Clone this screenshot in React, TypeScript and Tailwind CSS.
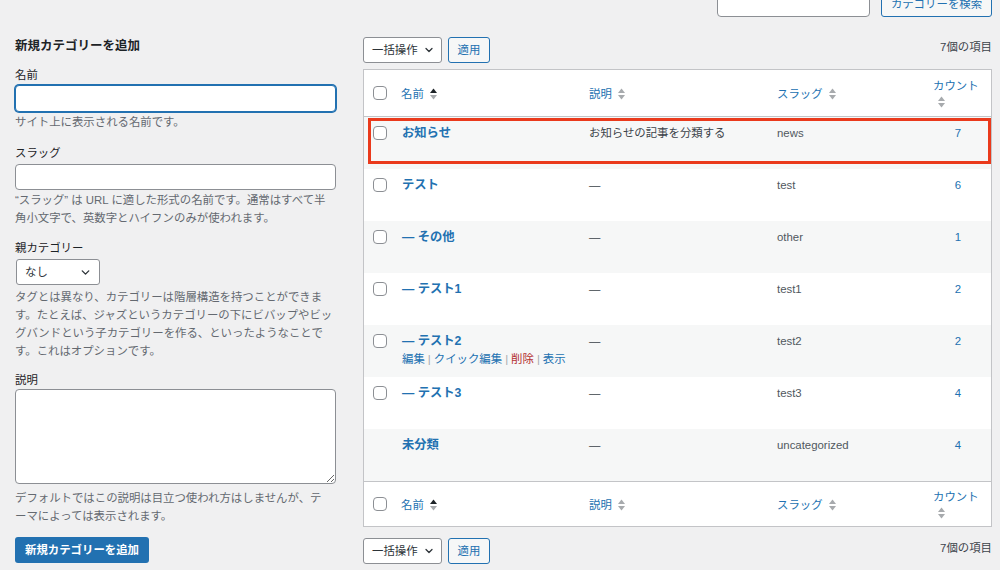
import { ChevronDown } from "lucide-react";

type Row = {
  id: string;
  name: string;
  desc: string;
  slug: string;
  count: number;
  actions?: boolean;
  noCheck?: boolean;
};

const ROWS: Row[] = [
  { id: "news", name: "お知らせ", desc: "お知らせの記事を分類する", slug: "news", count: 7 },
  { id: "test", name: "テスト", desc: "—", slug: "test", count: 6 },
  { id: "other", name: "— その他", desc: "—", slug: "other", count: 1 },
  { id: "test1", name: "— テスト1", desc: "—", slug: "test1", count: 2 },
  { id: "test2", name: "— テスト2", desc: "—", slug: "test2", count: 2, actions: true },
  { id: "test3", name: "— テスト3", desc: "—", slug: "test3", count: 4 },
  { id: "uncat", name: "未分類", desc: "—", slug: "uncategorized", count: 4, noCheck: true },
];

function SortIcon({ active }: { active?: boolean }) {
  return (
    <svg width="7" height="12" viewBox="0 0 7 12" className="shrink-0">
      <polygon points="0,5 3.5,0.5 7,5" fill={active ? "#1d2327" : "#a7aaad"} />
      <polygon points="0,7 7,7 3.5,11.5" fill="#a7aaad" />
    </svg>
  );
}

function Checkbox() {
  return <div className="w-[14px] h-[14px] rounded-[4px] border border-[#8c8f94] bg-white" />;
}

function HeaderRow({ top }: { top?: boolean }) {
  return (
    <div
      className={`grid grid-cols-[30px_187px_188px_156px_1fr] bg-white ${
        top ? "h-[47px] border-b border-[#c3c4c7]" : "h-[45px] border-t border-[#c3c4c7]"
      }`}
    >
      <div className="flex items-center pl-[9px]">
        <Checkbox />
      </div>
      <div className="flex items-center gap-[6px] pl-[7px] pt-[1px] text-[#2271b1]">
        名前 <SortIcon active />
      </div>
      <div className="flex items-center gap-[6px] pl-[8px] pt-[1px] text-[#2271b1]">
        説明 <SortIcon />
      </div>
      <div className="flex items-center gap-[6px] pl-[8px] pt-[1px] text-[#2271b1]">
        スラッグ <SortIcon />
      </div>
      <div className="flex flex-col justify-center pl-[8px] text-[#2271b1]">
        <span className="leading-[17px]">カウント</span>
        <span className="pl-[5px] pt-[1px]">
          <SortIcon />
        </span>
      </div>
    </div>
  );
}

function BulkBar() {
  return (
    <div className="flex items-center h-[26px]">
      <div className="w-[79px] h-[26px] rounded-[3px] border border-[#8c8f94] bg-white flex items-center pl-[8px] pr-[6px] justify-between text-[#2c3338]">
        一括操作
        <ChevronDown size={12} strokeWidth={2.5} color="#2c3338" />
      </div>
      <div className="ml-[6px] w-[42px] h-[26px] rounded-[3px] border border-[#2271b1] bg-[#f6f7f7] flex items-center justify-center text-[#2271b1]">
        適用
      </div>
      <div className="ml-auto self-start pt-[1px] text-[#3c434a]">7個の項目</div>
    </div>
  );
}

export default function App() {
  return (
    <div className="w-[1000px] h-[570px] overflow-hidden bg-[#f0f0f1] flex font-['Liberation_Sans','Noto_Sans_CJK_JP',sans-serif] text-[11.4px] leading-[18px] text-[#3c434a]">
      {/* left: add new category */}
      <div className="ml-[15px] w-[321px] shrink-0 pt-[36px]">
        <h2 className="text-[12.5px] font-bold leading-[20px] text-[#1d2327]">新規カテゴリーを追加</h2>

        <p className="mt-[10px] text-[#1d2327]">名前</p>
        <div className="mt-[1px] h-[27px] rounded-[4px] border border-[#2271b1] shadow-[0_0_0_1px_#2271b1] bg-white" />
        <p className="mt-[1px] text-[#646970]">サイト上に表示される名前です。</p>

        <p className="mt-[13px] text-[#1d2327]">スラッグ</p>
        <div className="mt-[2px] h-[26px] rounded-[4px] border border-[#8c8f94] bg-white" />
        <p className="mt-[1px] text-[#646970]">
          “スラッグ” は URL に適した形式の名前です。通常はすべて半角小文字で、英数字とハイフンのみが使われます。
        </p>

        <p className="mt-[12px] text-[#1d2327]">親カテゴリー</p>
        <div className="mt-[2px] ml-[1px] w-[84px] h-[26px] rounded-[3px] border border-[#8c8f94] bg-white flex items-center justify-between pl-[8px] pr-[7px] text-[#2c3338]">
          なし
          <ChevronDown size={13} strokeWidth={2.5} color="#2c3338" />
        </div>
        <p className="mt-[3px] text-[#646970]">
          タグとは異なり、カテゴリーは階層構造を持つことができます。たとえば、ジャズというカテゴリーの下にビバップやビッグバンドという子カテゴリーを作る、といったようなことです。これはオプションです。
        </p>

        <p className="mt-[11px] text-[#1d2327]">説明</p>
        <textarea className="block w-full h-[95px] rounded-[4px] border border-[#8c8f94] bg-white resize-y" />
        <p className="mt-[5px] text-[#646970]">
          デフォルトではこの説明は目立つ使われ方はしませんが、テ
          <br />
          ーマによっては表示されます。
        </p>

        <div className="mt-[12px] w-[134px] h-[26px] rounded-[3px] bg-[#2271b1] text-white font-bold flex items-center justify-center">
          新規カテゴリーを追加
        </div>
      </div>

      {/* right: list table */}
      <div className="ml-[27px] mr-[8px] flex-1 flex flex-col">
        <div className="h-[17px] overflow-hidden flex items-end justify-end gap-[11px]">
          <div className="w-[153px] h-[30px] rounded-[4px] border border-[#8c8f94] bg-white" />
          <div className="w-[111px] h-[27px] rounded-[3px] border border-[#2271b1] bg-[#f6f7f7] text-[#2271b1] flex items-center justify-center">
            カテゴリーを検索
          </div>
        </div>

        <div className="mt-[20px]">
          <BulkBar />
        </div>

        <div className="mt-[6px] border border-[#c3c4c7] bg-white">
          <HeaderRow top />
          {ROWS.map((row, i) => (
            <div
              key={row.id}
              className={`relative grid grid-cols-[30px_187px_188px_156px_1fr] h-[52px] ${
                i % 2 === 0 ? "bg-[#f6f7f7]" : "bg-white"
              }`}
            >
              <div className="pl-[9px] pt-[9px]">{!row.noCheck && <Checkbox />}</div>
              <div className="pl-[8px] pt-[7px]">
                <p className="text-[12.3px] font-bold text-[#2271b1]">{row.name}</p>
                {row.actions && (
                  <p className="text-[11.4px] leading-[16px] mt-[1px]">
                    <span className="text-[#2271b1]">編集</span>
                    <span className="text-[#a7aaad] mx-[3px]">|</span>
                    <span className="text-[#2271b1]">クイック編集</span>
                    <span className="text-[#a7aaad] mx-[3px]">|</span>
                    <span className="text-[#b32d2e]">削除</span>
                    <span className="text-[#a7aaad] mx-[3px]">|</span>
                    <span className="text-[#2271b1]">表示</span>
                  </p>
                )}
              </div>
              <div className="pl-[8px] pt-[7px] text-[#3c434a]">{row.desc}</div>
              <div className="pl-[8px] pt-[7px] text-[#50575e]">{row.slug}</div>
              <div className="pt-[7px] text-center text-[#2271b1]">{row.count}</div>
              {i === 0 && (
                <div className="absolute left-[4px] top-[1px] w-[623px] h-[46px] border-[3px] border-[#ea3a1c] pointer-events-none" />
              )}
            </div>
          ))}
          <HeaderRow />
        </div>

        <div className="mt-[11px]">
          <BulkBar />
        </div>
      </div>
    </div>
  );
}
